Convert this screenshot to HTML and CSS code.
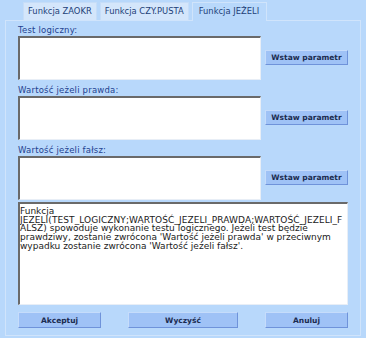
FILE: index.html
```html
<!DOCTYPE html>
<html lang="pl">
<head>
  <meta charset="UTF-8" />
  <title>Funkcja JEŻELI</title>
  <link rel="stylesheet" href="styles.css">
</head>
<body>
  <div class="tabs">
    <div class="tab">Funkcja ZAOKR</div>
    <div class="tab">Funkcja CZY.PUSTA</div>
    <div class="tab active">Funkcja JEŻELI</div>
  </div>

  <div class="panel">
    <div class="field-row">
      <div class="field">
        <label class="field-label">Test logiczny:</label>
        <textarea class="input"></textarea>
      </div>
      <button class="insert-btn">Wstaw parametr</button>
    </div>

    <div class="field-row">
      <div class="field">
        <label class="field-label">Wartość jeżeli prawda:</label>
        <textarea class="input"></textarea>
      </div>
      <button class="insert-btn">Wstaw parametr</button>
    </div>

    <div class="field-row">
      <div class="field">
        <label class="field-label">Wartość jeżeli fałsz:</label>
        <textarea class="input"></textarea>
      </div>
      <button class="insert-btn">Wstaw parametr</button>
    </div>

    <div class="description">Funkcja<br>
      <span class="code">JEZELI(TEST_LOGICZNY;WARTOŚĆ_JEZELI_PRAWDA;WARTOŚĆ_JEZELI_F</span><br>
      <span class="code">ALSZ)</span> spowoduje wykonanie testu logicznego. Jeżeli test będzie<br>
      prawdziwy, zostanie zwrócona 'Wartość jeżeli prawda' w przeciwnym<br>
      wypadku zostanie zwrócona 'Wartość jeżeli fałsz'.</div>

    <div class="actions">
      <button class="action-btn accept">Akceptuj</button>
      <button class="action-btn clear">Wyczyść</button>
      <button class="action-btn cancel">Anuluj</button>
    </div>
  </div>
</body>
</html>
```

FILE: styles.css
```css
html, body {
  margin: 0;
  padding: 0;
  background: #b8d8fb;
  font-family: "DejaVu Sans", Verdana, sans-serif;
  width: 366px;
  height: 338px;
  overflow: hidden;
}

.tabs {
  display: flex;
  gap: 3px;
  padding: 2px 0 0 23px;
  height: 18px;
}

.tab {
  background: #d4e6fb;
  color: #223f78;
  font-size: 8.4px;
  line-height: 16px;
  padding: 0 4px;
  border: 1px solid #c6ddf8;
  border-bottom: none;
}

.tab.active {
  background: #b8d8fb;
  border-color: #d0e4fb;
  height: 18px;
  padding: 0 7px 0 6px;
}

.panel {
  margin: 0 5px;
  height: 316px;
  box-sizing: border-box;
  border: 1px solid #d0e4fb;
  padding: 4px 12px 0 12px;
}

.field-row {
  display: flex;
  align-items: center;
  gap: 4px;
  margin-bottom: 5px;
}

.field {
  display: flex;
  flex-direction: column;
  width: 243px;
}

.field-label {
  font-size: 8.5px;
  color: #1f4290;
  height: 11px;
  line-height: 11px;
  letter-spacing: 0.2px;
}

.input {
  width: 243px;
  height: 44px;
  box-sizing: border-box;
  margin: 0;
  padding: 1px;
  resize: none;
  background: #fff;
  border-style: solid;
  border-width: 2px 1px 1px 2px;
  border-color: #6a6a6a #e8eef6 #e8eef6 #6a6a6a;
  font-family: inherit;
}

.insert-btn {
  width: 83px;
  height: 15px;
  margin-top: 10px;
  padding: 0;
  background: #9fc2f6;
  border: 1px solid;
  border-color: #c6dcfb #6f93da #6f93da #c6dcfb;
  color: #1b2b4f;
  font-family: inherit;
  font-size: 7.5px;
  font-weight: bold;
}

.description {
  margin-top: -3px;
  width: 330px;
  height: 103px;
  box-sizing: border-box;
  background: #fff;
  border-style: solid;
  border-width: 2px 1px 1px 2px;
  border-color: #6a6a6a #e8eef6 #e8eef6 #6a6a6a;
  padding: 3px 2px 0 0;
  font-size: 9px;
  line-height: 8.7px;
  color: #1a1a1a;
  white-space: nowrap;
  overflow: hidden;
}

.description .code {
  letter-spacing: 0.08px;
}

.actions {
  display: flex;
  justify-content: space-between;
  margin-top: 7px;
  width: 330px;
}

.action-btn {
  height: 16px;
  padding: 0;
  background: #9fc2f6;
  border: 1px solid;
  border-color: #c6dcfb #6f93da #6f93da #c6dcfb;
  color: #1b2b4f;
  font-family: inherit;
  font-size: 7.5px;
  font-weight: bold;
}

.action-btn.accept { width: 83px; }
.action-btn.clear { width: 110px; }
.action-btn.cancel { width: 83px; }
```
